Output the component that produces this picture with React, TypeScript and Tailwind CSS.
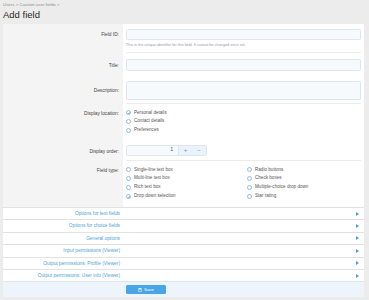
import React from 'react';

const font = { fontFamily: '"Liberation Sans", Arial, sans-serif' };

const Radio = ({ label, checked = false }: { label: string; checked?: boolean }) => (
  <div className="flex items-center gap-[3px] h-[8.9px]">
    <span className="relative w-[5px] h-[5px] rounded-full border-[0.7px] border-[#8fbde3] bg-white">
      {checked && (
        <svg className="absolute left-0 top-0" width="4" height="4" viewBox="0 0 10 10" fill="none" stroke="#4aa2e0" strokeWidth="2.2">
          <path d="M2 5.2 L4.2 7.4 L8 2.8" />
        </svg>
      )}
    </span>
    <span className="text-[4.6px] text-[#555]">{label}</span>
  </div>
);

const FormRow = ({
  label,
  h,
  sep = true,
  labelTop,
  children,
}: {
  label: string;
  h: number;
  sep?: boolean;
  labelTop?: string;
  children: React.ReactNode;
}) => (
  <div className="flex" style={{ height: h }}>
    <div className={`w-[120px] bg-[#f4f4f4] flex justify-end pr-[4px] ${labelTop ?? 'items-center'}`}>
      <span className="text-[4.8px] text-[#444]">{label}</span>
    </div>
    <div className="flex-1 bg-white px-[3px] flex flex-col">
      <div className="flex-1">{children}</div>
      {sep && <div className="h-px bg-[#ececec]" />}
    </div>
  </div>
);

const sections = [
  'Options for text fields',
  'Options for choice fields',
  'General options',
  'Input permissions (Viewer)',
  'Output permissions: Profile (Viewer)',
  'Output permissions: User info (Viewer)',
];

export default function App() {
  return (
    <div className="w-[369px] h-[300px] bg-[#ececec] overflow-hidden" style={font}>
      <div className="pl-[3px] pt-[2px] h-[9px] text-[4.4px] text-[#8c8c8c]">Users &gt; Custom user fields &gt;</div>
      <div className="pl-[3px] h-[13px] text-[9.5px] leading-[12px] text-[#2a2a2a]">Add field</div>

      <div className="ml-[3px] mr-[5px] mt-[2px]">
        {/* Field ID */}
        <FormRow label="Field ID:" h={29} labelTop="items-start pt-[7px]">
          <div className="mt-[5px] h-[11px] rounded-[1.5px] border-[0.7px] border-[#dde5ee] bg-[#f6fafd]" />
          <div className="mt-[3px] text-[3.8px] text-[#9a9a9a]">
            This is the unique identifier for this field. It cannot be changed once set.
          </div>
        </FormRow>

        {/* Title */}
        <FormRow label="Title:" h={23} sep={false} labelTop="items-start pt-[9px]">
          <div className="mt-[6px] h-[12px] rounded-[1.5px] border-[0.7px] border-[#dde5ee] bg-[#f6fafd]" />
        </FormRow>

        {/* Description */}
        <FormRow label="Description:" h={28} labelTop="items-start pt-[11px]">
          <div className="mt-[5px] h-[19px] rounded-[1.5px] border-[0.7px] border-[#dde5ee] bg-[#f6fafd]" />
        </FormRow>

        {/* Display location */}
        <FormRow label="Display location:" h={35} sep={false} labelTop="items-start pt-[6px]">
          <div className="pt-[4.5px]">
            <Radio label="Personal details" checked />
            <Radio label="Contact details" />
            <Radio label="Preferences" />
          </div>
        </FormRow>

        {/* Display order */}
        <FormRow label="Display order:" h={22} labelTop="items-start pt-[9px]">
          <div className="mt-[6px] w-[81px] h-[11px] rounded-[1.5px] border-[0.7px] border-[#dde5ee] bg-[#f6fafd] flex">
            <div className="w-[52px] flex items-center justify-end pr-[5px] text-[4.6px] text-[#444]">1</div>
            <div className="flex-1 bg-[#eaf2fa] flex items-center text-[6px] text-[#4aa2e0]">
              <span className="w-[14px] text-center border-l border-[#dde5ee]">+</span>
              <span className="w-[14px] text-center">−</span>
            </div>
          </div>
        </FormRow>

        {/* Field type */}
        <FormRow label="Field type:" h={46} sep={false} labelTop="items-start pt-[6px]">
          <div className="pt-[4.5px] grid grid-cols-[121px_1fr]">
            <div>
              <Radio label="Single-line text box" />
              <Radio label="Multi-line text box" />
              <Radio label="Rich text box" />
              <Radio label="Drop down selection" checked />
            </div>
            <div>
              <Radio label="Radio buttons" />
              <Radio label="Check boxes" />
              <Radio label="Multiple-choice drop down" />
              <Radio label="Star rating" />
            </div>
          </div>
        </FormRow>

        {/* Collapsible sections */}
        <div className="flex flex-col">
          {sections.map((s) => (
            <div
              key={s}
              className="h-[12.4px] bg-white border-t border-[#e2e2e2] flex items-center"
            >
              <span className="w-[117px] text-right text-[4.8px] text-[#4f9fd6]">{s}</span>
              <svg className="ml-auto mr-[5px]" width="3" height="4" viewBox="0 0 6 8" fill="#4f9fd6">
                <path d="M0 0 L6 4 L0 8 Z" />
              </svg>
            </div>
          ))}
        </div>

        {/* Footer */}
        <div className="h-[16px] bg-[#edf4fb] border-t border-[#dbe7f2] flex items-center">
          <div className="ml-[123px] w-[40px] h-[9px] rounded-[1.5px] bg-[#47a5e8] flex items-center justify-center gap-[2px] text-white">
            <svg width="4" height="4" viewBox="0 0 10 10" fill="none" stroke="white" strokeWidth="1.3">
              <rect x="1" y="1" width="8" height="8" rx="1" />
              <rect x="3" y="1" width="4" height="3" />
            </svg>
            <span className="text-[4.4px]">Save</span>
          </div>
        </div>
      </div>
    </div>
  );
}
